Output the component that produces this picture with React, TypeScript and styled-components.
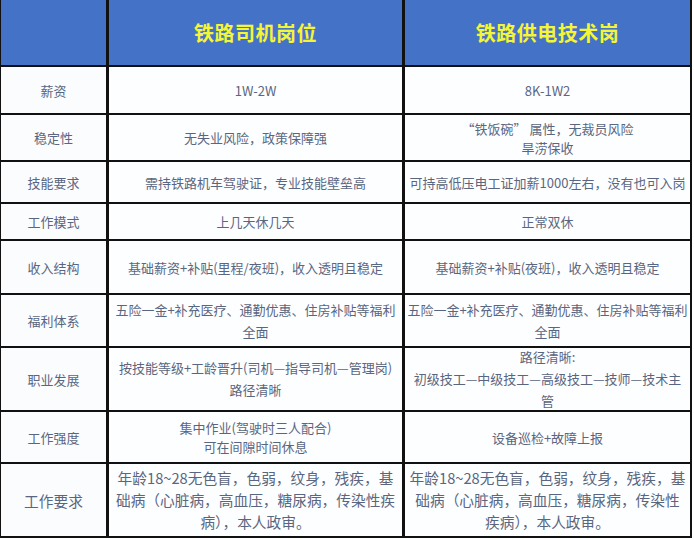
import styled, { createGlobalStyle } from "styled-components";

const rows: { label: string; a: string[]; b: string[]; big?: boolean; lh?: number }[] = [
  { label: "薪资", a: ["1W-2W"], b: ["8K-1W2"] },
  { label: "稳定性", a: ["无失业风险，政策保障强"], b: ["“铁饭碗” 属性，无裁员风险", "旱涝保收"] },
  { label: "技能要求", a: ["需持铁路机车驾驶证，专业技能壁垒高"], b: ["可持高低压电工证加薪1000左右，没有也可入岗"] },
  { label: "工作模式", a: ["上几天休几天"], b: ["正常双休"] },
  { label: "收入结构", a: ["基础薪资+补贴(里程/夜班)，收入透明且稳定"], b: ["基础薪资+补贴(夜班)，收入透明且稳定"] },
  {
    label: "福利体系",
    lh: 22,
    a: ["五险一金+补充医疗、通勤优惠、住房补贴等福利", "全面"],
    b: ["五险一金+补充医疗、通勤优惠、住房补贴等福利", "全面"],
  },
  {
    label: "职业发展",
    lh: 22,
    a: ["按技能等级+工龄晋升(司机—指导司机—管理岗)", "路径清晰"],
    b: ["路径清晰:", "初级技工—中级技工—高级技工—技师—技术主", "管"],
  },
  { label: "工作强度", a: ["集中作业(驾驶时三人配合)", "可在间隙时间休息"], b: ["设备巡检+故障上报"] },
  {
    label: "工作要求",
    big: true,
    lh: 22,
    a: ["年龄18~28无色盲，色弱，纹身，残疾，基", "础病（心脏病，高血压，糖尿病，传染性疾", "病），本人政审。"],
    b: ["年龄18~28无色盲，色弱，纹身，残疾，基", "础病（心脏病，高血压，糖尿病，传染性", "疾病），本人政审。"],
  },
];

export default function App() {
  return (
    <>
      <GlobalStyle />
      <Table>
        <HeadCell />
        <HeadCell>铁路司机岗位</HeadCell>
        <HeadCell>铁路供电技术岗</HeadCell>
        {rows.map((r) => (
          <Row key={r.label}>
            <Label $big={r.big}>{r.label}</Label>
            <Cell $big={r.big} $lh={r.lh}>
              {r.a.map((l) => (
                <Line key={l}>{l}</Line>
              ))}
            </Cell>
            <Cell $big={r.big} $lh={r.lh}>
              {r.b.map((l) => (
                <Line key={l}>{l}</Line>
              ))}
            </Cell>
          </Row>
        ))}
      </Table>
    </>
  );
}

const GlobalStyle = createGlobalStyle`
  body {
    margin: 0;
    background: #ffffff;
    font-family: "Noto Sans CJK SC", "Noto Sans", sans-serif;
  }
`;

const Table = styled.div`
  display: grid;
  grid-template-columns: 105px 293px 285px;
  grid-template-rows: 65px 46px 45px 40px 35px 52px 51px 62px 50px 72px;
  column-gap: 3px;
  row-gap: 2px;
  padding: 0 2px 2px 1px;
  width: 692px;
  box-sizing: border-box;
  background: #111;
`;

const HeadCell = styled.div`
  display: flex;
  align-items: center;
  justify-content: center;
  background: #4472c6;
  color: #f4f535;
  font-size: 20px;
  font-weight: 700;
  letter-spacing: 0.5px;
`;

const Row = styled.div`
  display: contents;
`;

const Cell = styled.div<{ $big?: boolean; $lh?: number }>`
  display: flex;
  flex-direction: column;
  align-items: center;
  justify-content: center;
  background: #fdfeff;
  color: #5a6680;
  font-size: ${(p) => (p.$big ? "14.7px" : "13px")};
  line-height: ${(p) => p.$lh ?? 19}px;
  text-align: center;
  white-space: nowrap;
`;

const Label = styled(Cell)`
  background: #fbfcfe;
`;

const Line = styled.div``;
